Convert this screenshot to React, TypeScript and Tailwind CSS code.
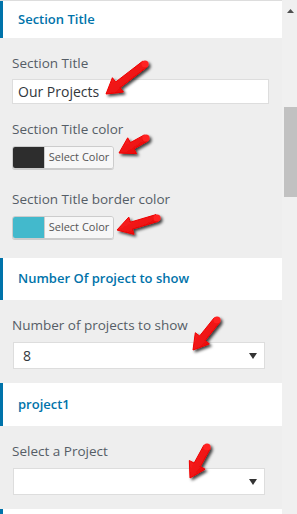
import React from 'react';

const font = { fontFamily: '"Open Sans", "Noto Sans", Arial, sans-serif' };

type Pt = [number, number];

// red annotation arrow: tail -> tip
const arrowPoints = (tail: Pt, tip: Pt) => {
  const dx = tip[0] - tail[0];
  const dy = tip[1] - tail[1];
  const len = Math.hypot(dx, dy);
  const ux = dx / len;
  const uy = dy / len;
  const nx = -uy;
  const ny = ux;
  const headLen = 15;
  const shaft = 3.6;
  const head = 9;
  const bx = tip[0] - ux * headLen;
  const by = tip[1] - uy * headLen;
  const pts: Pt[] = [
    [tail[0] + nx * shaft, tail[1] + ny * shaft],
    [bx + nx * shaft, by + ny * shaft],
    [bx + nx * head, by + ny * head],
    tip,
    [bx - nx * head, by - ny * head],
    [bx - nx * shaft, by - ny * shaft],
    [tail[0] - nx * shaft, tail[1] - ny * shaft],
  ];
  return pts.map((p) => `${p[0].toFixed(1)},${p[1].toFixed(1)}`).join(' ');
};

const arrows: [Pt, Pt][] = [
  [[145, 64], [106, 94]],
  [[146, 138], [119, 153]],
  [[157, 218], [117, 230]],
  [[217, 320], [193, 350]],
  [[207, 447], [190, 478]],
];

const SectionHeader = ({ title, className = '' }: { title: string; className?: string }) => (
  <div className={`shrink-0 bg-white border-l-[3px] border-[#0073aa] flex items-center pl-[15px] ${className}`}>
    <span className="text-[13px] font-semibold text-[#0073aa]">{title}</span>
  </div>
);

const Label = ({ children }: { children: React.ReactNode }) => (
  <div className="text-[13.5px] text-[#555d66] leading-5 pl-3">{children}</div>
);

const ColorButton = ({ color }: { color: string }) => (
  <div className="ml-3 flex h-[23px] w-[102px] rounded-[3px] border border-[#cccccc] overflow-hidden shadow-[0_1px_0_#cccccc]">
    <div className="w-[31px] h-full" style={{ backgroundColor: color }} />
    <div className="flex-1 bg-[#f7f7f7] border-l border-[#cccccc] flex items-center justify-center text-[11px] text-[#555555]">
      Select Color
    </div>
  </div>
);

const SelectBox = ({ value }: { value: string }) => (
  <div className="ml-[13px] w-[252px] h-[27px] bg-white border border-[#dddddd] flex items-center justify-between pl-[9px] pr-[7px]">
    <span className="text-[14px] text-[#32373c]">{value}</span>
    <svg width="8" height="6" viewBox="0 0 8 6">
      <path d="M0 0 L8 0 L4 6 Z" fill="#333333" />
    </svg>
  </div>
);

export default function App() {
  return (
    <div className="relative w-[297px] h-[514px] flex overflow-hidden" style={font}>
      <div className="w-[282px] h-full bg-[#eeeeee] overflow-hidden">
        <div className="h-px bg-[#dddddd]" />
        <SectionHeader title="Section Title" className="h-[37px]" />
        <div className="pt-[15px]">
          <Label>Section Title</Label>
          <div className="mt-[6px] ml-3 w-[257px] h-[25px] bg-white border border-[#dddddd] flex items-center pl-[5px] text-[14px] text-[#32373c]">
            Our Projects
          </div>
          <div className="mt-[15px]">
            <Label>Section Title color</Label>
          </div>
          <div className="mt-[7px]">
            <ColorButton color="#2d2d2d" />
          </div>
          <div className="mt-[20px]">
            <Label>Section Title border color</Label>
          </div>
          <div className="mt-[7px]">
            <ColorButton color="#43b9cc" />
          </div>
        </div>
        <SectionHeader title="Number Of project to show" className="mt-[19px] h-[42px]" />
        <div className="pt-[15px]">
          <Label>Number of projects to show</Label>
          <div className="mt-[7px]">
            <SelectBox value="8" />
          </div>
        </div>
        <SectionHeader title="project1" className="mt-[14px] h-[43px]" />
        <div className="pt-[15px]">
          <Label>Select a Project</Label>
          <div className="mt-[7px]">
            <SelectBox value="" />
          </div>
        </div>
        <SectionHeader title="" className="mt-[14px] h-[42px]" />
      </div>

      <div className="w-[15px] h-full bg-[#f0f0f0] flex flex-col items-end">
        <div className="w-full flex justify-center pt-[9px] pl-[2px]">
          <svg width="7" height="4" viewBox="0 0 7 4">
            <path d="M0 4 L3.5 0 L7 4 Z" fill="#505050" />
          </svg>
        </div>
        <div className="mt-[94px] w-[13px] h-[90px] shrink-0 bg-[#c1c1c1]" />
      </div>

      <svg className="absolute inset-0 pointer-events-none" width="297" height="514">
        <defs>
          <filter id="sh" x="-50%" y="-50%" width="200%" height="200%">
            <feDropShadow dx="2" dy="2" stdDeviation="1.6" floodColor="#000000" floodOpacity="0.75" />
          </filter>
          <linearGradient id="rg" x1="0" y1="0" x2="1" y2="1">
            <stop offset="0" stopColor="#ff2a2a" />
            <stop offset="1" stopColor="#e00000" />
          </linearGradient>
        </defs>
        {arrows.map(([tail, tip], i) => (
          <g key={i} filter="url(#sh)">
            <polygon points={arrowPoints(tail, tip)} fill="url(#rg)" strokeLinejoin="round" stroke="#f00000" strokeWidth="1" />
            <circle cx={tail[0]} cy={tail[1]} r="3.6" fill="#ff2020" />
          </g>
        ))}
      </svg>
    </div>
  );
}
